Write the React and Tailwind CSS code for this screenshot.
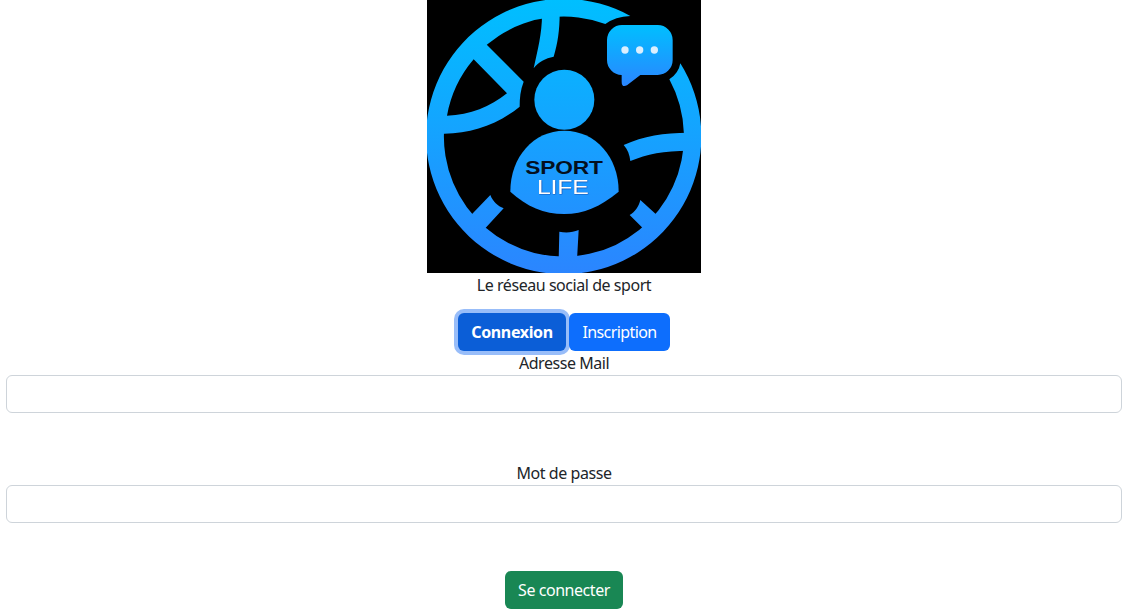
function Logo() {
  return (
    <svg viewBox="0 0 822 819" className="block w-[274px] h-[273px] bg-black" role="img" aria-label="Sport Life">
      <defs>
        <linearGradient id="main" gradientUnits="userSpaceOnUse" x1="0" y1="0" x2="0" y2="822">
          <stop offset="0" stopColor="#00bfff" />
          <stop offset="1" stopColor="#2b85ff" />
        </linearGradient>
        <linearGradient id="bubble" gradientUnits="userSpaceOnUse" x1="0" y1="75" x2="0" y2="260">
          <stop offset="0" stopColor="#00bfff" />
          <stop offset="1" stopColor="#2b85ff" />
        </linearGradient>
      </defs>
      <g fill="url(#main)">
        <path d="M610 48 A413 413 0 1 0 760 190 Q755 220 727 238 A360 360 0 1 1 535 72 Q565 50 610 48 Z" />
        <path d="M345 45 C345 100 332 150 320 205 C335 185 355 175 380 170 C392 130 398 90 398 40 Z" />
        <path fillRule="evenodd" d="M180 135 L290 245 C280 270 278 295 278 320 C210 375 135 400 52 401 L30 400 L60 200 L140 120 Z M140 178 L240 280 C190 320 130 345 60 347 A358 358 0 0 1 140 178 Z" />
        <path d="M590 435 C650 408 710 398 785 398 L785 452 C710 452 660 462 610 483 C608 465 602 448 590 435 Z" />
        <path d="M110 668 L190 585 C198 605 212 618 230 625 L150 712 Z" />
        <path d="M715 668 L640 600 C635 620 625 635 608 645 L675 712 Z" />
        <path d="M397 695 C415 699 437 698 455 690 L450 780 L395 780 Z" />
        <circle cx="412" cy="299" r="90" />
        <path d="M250 575 C250 470 320 392 412 392 C505 392 575 470 575 575 C520 620 470 642 412 642 C350 642 300 620 250 575 Z" />
      </g>
      <path
        fill="url(#bubble)"
        d="M585 75 H692 A45 45 0 0 1 737 120 V180 A45 45 0 0 1 692 225 H640 L600 256 Q584 264 584 245 V225 A45 45 0 0 1 540 180 V120 A45 45 0 0 1 585 75 Z"
      />
      <g fill="#dceffe">
        <circle cx="594" cy="150" r="11" />
        <circle cx="638" cy="150" r="11" />
        <circle cx="682" cy="150" r="11" />
      </g>
      <text x="295" y="521" textLength="232" lengthAdjust="spacingAndGlyphs" fontFamily="'Liberation Sans', sans-serif" fontWeight="700" fontSize="56" fill="#04101f">SPORT</text>
      <text x="330" y="582" textLength="155" lengthAdjust="spacingAndGlyphs" fontFamily="'Liberation Sans', sans-serif" fontSize="60" fill="#ffffff" className="drop-shadow-[1px_1px_0_#0a2f8c]">LIFE</text>
    </svg>
  );
}

export default function App() {
  return (
    <div className="min-h-[616px] w-[1128px] bg-white px-[6px] text-center text-[16px] leading-6 text-[#212529] font-['Noto_Sans',sans-serif] tracking-[-0.45px]">
      <div className="flex justify-center">
        <Logo />
      </div>
      <p className="mb-4">Le réseau social de sport</p>
      <div className="flex justify-center gap-[3px] h-[38px]">
        <button className="w-[108px] h-[38px] rounded-md bg-[#0b5ed7] text-white font-bold tracking-[-0.35px] ring-4 ring-[#98bdf9]">Connexion</button>
        <button className="w-[101px] h-[38px] rounded-md bg-[#0d6efd] text-white tracking-[-0.6px]">Inscription</button>
      </div>
      <label className="block">Adresse Mail</label>
      <input className="block w-full h-[38px] rounded-md border border-[#ced4da] bg-white" />
      <label className="block mt-12">Mot de passe</label>
      <input type="password" className="block w-full h-[38px] rounded-md border border-[#ced4da] bg-white" />
      <div className="flex justify-center mt-12">
        <button className="w-[118px] h-[38px] rounded-md bg-[#198754] text-white">Se connecter</button>
      </div>
    </div>
  );
}
